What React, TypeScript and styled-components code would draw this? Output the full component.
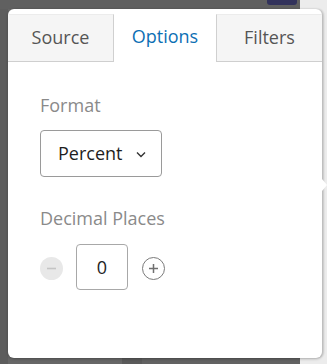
import styled, { createGlobalStyle } from 'styled-components';

const GlobalStyle = createGlobalStyle`
  html, body {
    margin: 0;
    padding: 0;
    background: #646464;
  }
  * {
    box-sizing: border-box;
  }
`;

const tabs = ['Source', 'Options', 'Filters'];

const App = () => {
  return (
    <>
      <GlobalStyle />
      <Page>
        <NavyMark />
        <Popover>
          <TabBar>
            {tabs.map((t) => (
              <Tab key={t} $active={t === 'Options'}>
                {t}
              </Tab>
            ))}
          </TabBar>
          <Body>
            <Label>Format</Label>
            <Select>
              <span>Percent</span>
              <svg width="10" height="7" viewBox="0 0 10 7">
                <path d="M1 1.5 L5 5.5 L9 1.5" fill="none" stroke="#333" strokeWidth="1.4" />
              </svg>
            </Select>
            <Label $spaced>Decimal Places</Label>
            <Stepper>
              <RoundButton $disabled aria-label="decrease">
                <svg width="11" height="11" viewBox="0 0 11 11">
                  <path d="M1 5.5 H10" stroke="#c4c4c4" strokeWidth="1.6" />
                </svg>
              </RoundButton>
              <NumberBox>0</NumberBox>
              <RoundButton aria-label="increase">
                <svg width="11" height="11" viewBox="0 0 11 11">
                  <path d="M1 5.5 H10 M5.5 1 V10" stroke="#6f6f6f" strokeWidth="1.5" />
                </svg>
              </RoundButton>
            </Stepper>
          </Body>
        </Popover>
      </Page>
    </>
  );
};

const Page = styled.div`
  position: relative;
  width: 327px;
  height: 364px;
  padding: 9px 5px 6px 8px;
  font-family: "Open Sans", "Liberation Sans", sans-serif;
  background:
    linear-gradient(to right, transparent 0 300px, #ececec 300px 327px),
    linear-gradient(to bottom, #606060 0 9px, transparent 9px),
    linear-gradient(to right, #5d5d5d 0 8px, #676767 8px 122px, #5a5a5a 122px 142px, #626262 142px 300px);
`;

const NavyMark = styled.div`
  position: absolute;
  top: 0;
  left: 267px;
  width: 30px;
  height: 5px;
  background: #2a2a5a;
  border-radius: 0 0 3px 3px;
  opacity: 0.85;
`;

const Popover = styled.div`
  position: relative;
  width: 314px;
  height: 349px;
  background: #fff;
  border-radius: 6px;
  box-shadow: 0 1px 3px rgba(0, 0, 0, 0.25), 2px 0 2px rgba(0, 0, 0, 0.12);
  &::after {
    content: "";
    position: absolute;
    top: 170px;
    right: -5px;
    width: 0;
    height: 0;
    border-top: 6px solid transparent;
    border-bottom: 6px solid transparent;
    border-left: 5px solid #fff;
  }
`;

const TabBar = styled.div`
  display: flex;
  height: 53px;
  border-radius: 6px 6px 0 0;
  overflow: hidden;
`;

const Tab = styled.div<{ $active?: boolean }>`
  flex: ${(p) => (p.$active ? '0 0 102px' : '1 1 0')};
  text-align: center;
  font-size: 18px;
  line-height: 24.5px;
  color: ${(p) => (p.$active ? '#0d6fb4' : '#555')};
  background: ${(p) => (p.$active ? '#fff' : '#f5f5f5')};
  margin-top: ${(p) => (p.$active ? '0' : '5px')};
  padding-top: ${(p) => (p.$active ? '14.6px' : '9.6px')};
  border-bottom: ${(p) => (p.$active ? 'none' : '1px solid #cfcfcf')};
  border-top: ${(p) => (p.$active ? 'none' : '1px solid #ececec')};
  &:first-child {
    border-right: 1px solid #d0d0d0;
  }
  &:last-child {
    border-left: 1px solid #d0d0d0;
  }
`;

const Body = styled.div`
  display: flex;
  flex-direction: column;
  align-items: flex-start;
  padding: 31px 32px 0;
`;

const Label = styled.div<{ $spaced?: boolean }>`
  font-size: 18px;
  line-height: 24.5px;
  color: #8a8a8a;
  margin-top: ${(p) => (p.$spaced ? '29px' : '0')};
`;

const Select = styled.div`
  margin-top: 12px;
  width: 122px;
  height: 47px;
  border: 1px solid #9a9a9a;
  border-radius: 4px;
  display: flex;
  align-items: center;
  gap: 14px;
  padding-left: 17px;
  font-size: 18px;
  color: #1e1e1e;
  svg {
    margin-top: 2px;
  }
`;

const Stepper = styled.div`
  margin-top: 14px;
  display: flex;
  align-items: center;
`;

const RoundButton = styled.div<{ $disabled?: boolean }>`
  width: 23px;
  height: 23px;
  border-radius: 50%;
  display: flex;
  align-items: center;
  justify-content: center;
  background: ${(p) => (p.$disabled ? '#e8e8e8' : '#fff')};
  border: ${(p) => (p.$disabled ? 'none' : '1px solid #7a7a7a')};
  margin-top: 2px;
`;

const NumberBox = styled.div`
  width: 52px;
  height: 46px;
  margin: 0 14px 0 13px;
  border: 1px solid #a8a8a8;
  border-radius: 4px;
  display: flex;
  align-items: center;
  justify-content: center;
  font-size: 18px;
  color: #1e1e1e;
`;

export default App;
